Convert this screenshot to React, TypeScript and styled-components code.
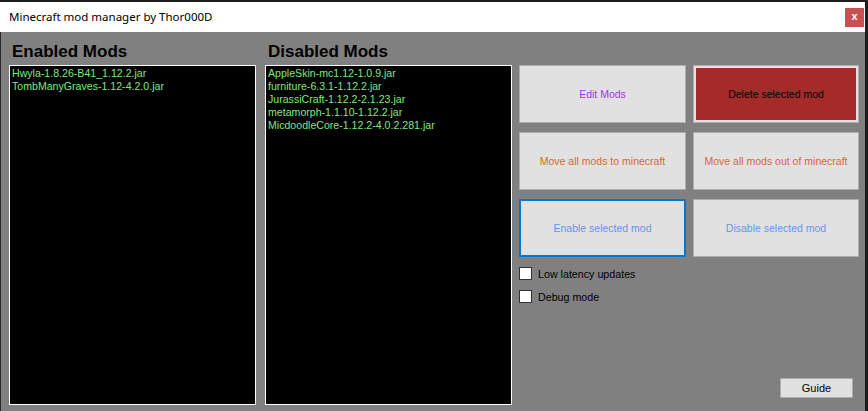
import styled, { createGlobalStyle } from "styled-components";

const GlobalStyle = createGlobalStyle`
	html, body {
		margin: 0;
		padding: 0;
		background: #1e1e1e;
		overflow: hidden;
	}
`;

const Desktop = styled.div`
	display: flex;
	flex-direction: column;
	width: 868px;
	height: 411px;
	background: #1c1c1c;
`;

const TopStrip = styled.div`
	height: 2px;
	flex: none;
`;

const Window = styled.div`
	display: flex;
	flex-direction: column;
	width: 865px;
	flex: 1;
`;

const TitleBar = styled.div`
	display: flex;
	align-items: center;
	justify-content: space-between;
	height: 30px;
	background: #ffffff;
	padding-left: 9px;
	padding-right: 1px;
	box-sizing: border-box;
`;

const Title = styled.span`
	font-family: "Segoe UI", "Noto Sans", sans-serif;
	font-size: 11.5px;
	color: #000;
	padding-bottom: 1px;
`;

const CloseButton = styled.div`
	display: flex;
	align-items: center;
	justify-content: center;
	width: 19px;
	height: 19px;
	background: #c75050;
	color: #fff;
	font-family: "Liberation Sans", sans-serif;
	font-weight: bold;
	font-size: 11px;
	line-height: 1;
	padding-bottom: 2px;
	box-sizing: border-box;
`;

const Client = styled.div`
	flex: 1;
	display: flex;
	background: #808080;
	border-left: 1px solid #2a2a2a;
	padding-left: 8px;
`;

const ListColumn = styled.div<{ $gap?: number }>`
	display: flex;
	flex-direction: column;
	width: 247px;
	margin-left: ${(p) => p.$gap ?? 0}px;
`;

const Heading = styled.div`
	height: 33px;
	box-sizing: border-box;
	padding: 11px 0 0 3px;
	font-family: "Liberation Sans", Arial, sans-serif;
	font-weight: bold;
	font-size: 17px;
	line-height: 17px;
	color: #000;
`;

const ListBox = styled.div`
	height: 340px;
	box-sizing: border-box;
	border: 1px solid #ffffff;
	background: #000;
	padding: 1px 2px;
	font-family: "Liberation Sans", Arial, sans-serif;
	font-size: 10.6px;
	line-height: 13px;
	color: #7fe87f;
`;

const SidePanel = styled.div`
	display: flex;
	flex-direction: column;
	width: 341px;
	margin-left: 7px;
	padding-top: 33px;
	padding-bottom: 13px;
	box-sizing: border-box;
`;

const ButtonGrid = styled.div`
	display: grid;
	grid-template-columns: 167px 166px;
	grid-auto-rows: 58px;
	column-gap: 7px;
	row-gap: 9px;
`;

const ActionButton = styled.div<{ $color: string; $focused?: boolean; $danger?: boolean }>`
	display: flex;
	align-items: center;
	justify-content: center;
	box-sizing: border-box;
	background: ${(p) => (p.$danger ? "#a52a2a" : "#e1e1e1")};
	border: ${(p) => (p.$focused ? "2px solid #0078d7" : "1px solid #adadad")};
	box-shadow: ${(p) => (p.$danger ? "inset 0 0 0 2px #e1e1e1" : "none")};
	color: ${(p) => p.$color};
	font-family: "Liberation Sans", Arial, sans-serif;
	font-size: 10.5px;
`;

const Options = styled.div`
	display: flex;
	flex-direction: column;
	gap: 10px;
	margin-top: 10px;
`;

const OptionRow = styled.label`
	display: flex;
	align-items: center;
	gap: 6px;
	font-family: "Liberation Sans", Arial, sans-serif;
	font-size: 10.7px;
	color: #000;
	height: 13px;
`;

const CheckBox = styled.span`
	width: 13px;
	height: 13px;
	box-sizing: border-box;
	background: #fff;
	border: 1px solid #333;
`;

const Spacer = styled.div`
	flex: 1;
`;

const GuideButton = styled.div`
	align-self: flex-end;
	margin-right: 7px;
	width: 73px;
	height: 20px;
	box-sizing: border-box;
	display: flex;
	align-items: center;
	justify-content: center;
	background: #e1e1e1;
	border: 1px solid #adadad;
	font-family: "Liberation Sans", Arial, sans-serif;
	font-size: 11px;
	color: #000;
`;

const enabledMods = ["Hwyla-1.8.26-B41_1.12.2.jar", "TombManyGraves-1.12-4.2.0.jar"];
const disabledMods = [
	"AppleSkin-mc1.12-1.0.9.jar",
	"furniture-6.3.1-1.12.2.jar",
	"JurassiCraft-1.12.2-2.1.23.jar",
	"metamorph-1.1.10-1.12.2.jar",
	"MicdoodleCore-1.12.2-4.0.2.281.jar",
];

export default function App() {
	return (
		<Desktop>
			<GlobalStyle />
			<TopStrip />
			<Window>
				<TitleBar>
					<Title>Minecraft mod manager by Thor000D</Title>
					<CloseButton>x</CloseButton>
				</TitleBar>
				<Client>
					<ListColumn>
						<Heading>Enabled Mods</Heading>
						<ListBox>
							{enabledMods.map((m) => (
								<div key={m}>{m}</div>
							))}
						</ListBox>
					</ListColumn>
					<ListColumn $gap={9}>
						<Heading>Disabled Mods</Heading>
						<ListBox>
							{disabledMods.map((m) => (
								<div key={m}>{m}</div>
							))}
						</ListBox>
					</ListColumn>
					<SidePanel>
						<ButtonGrid>
							<ActionButton $color="#a035ee">Edit Mods</ActionButton>
							<ActionButton $color="#000" $danger>
								Delete selected mod
							</ActionButton>
							<ActionButton $color="#d86a2c">Move all mods to minecraft</ActionButton>
							<ActionButton $color="#d86a2c">Move all mods out of minecraft</ActionButton>
							<ActionButton $color="#6495ed" $focused>
								Enable selected mod
							</ActionButton>
							<ActionButton $color="#6495ed">Disable selected mod</ActionButton>
						</ButtonGrid>
						<Options>
							<OptionRow>
								<CheckBox />
								Low latency updates
							</OptionRow>
							<OptionRow>
								<CheckBox />
								Debug mode
							</OptionRow>
						</Options>
						<Spacer />
						<GuideButton>Guide</GuideButton>
					</SidePanel>
				</Client>
			</Window>
		</Desktop>
	);
}
